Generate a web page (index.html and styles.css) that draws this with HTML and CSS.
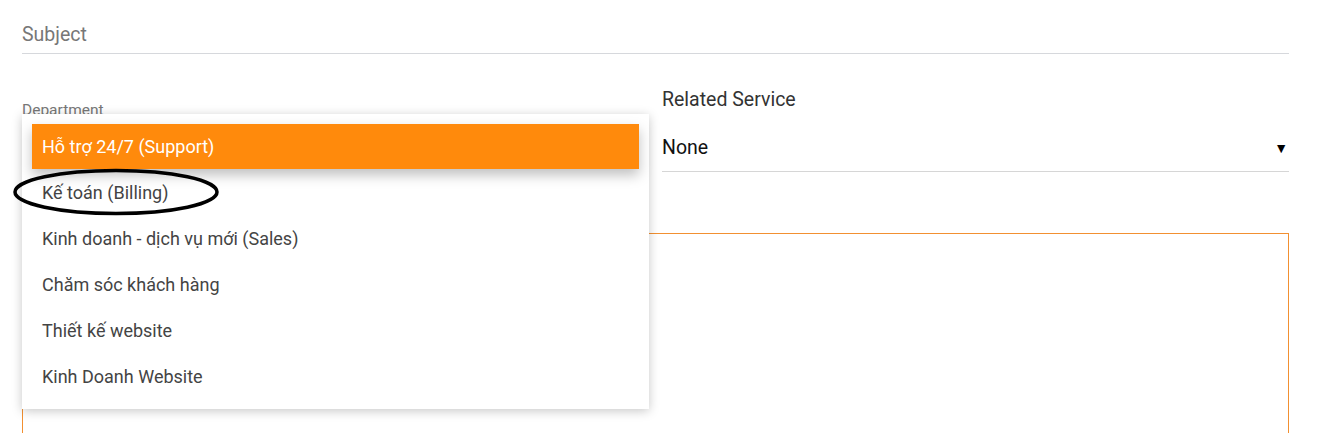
FILE: index.html
```html
<!DOCTYPE html>
<html lang="vi">
<head>
<meta charset="utf-8">
<title>Ticket</title>
<link rel="stylesheet" href="styles.css">
</head>
<body>
<div class="form">
  <div class="field subject">
    <span class="placeholder">Subject</span>
  </div>
  <div class="row">
    <div class="col">
      <label class="float-label">Department</label>
    </div>
    <div class="col">
      <label class="label">Related Service</label>
      <div class="select">
        <span class="value">None</span>
        <span class="arrow">&#9660;</span>
      </div>
    </div>
  </div>
  <div class="textarea"></div>

  <ul class="menu">
    <li class="item active">Hỗ trợ 24/7 (Support)</li>
    <li class="item">Kế toán (Billing)</li>
    <li class="item">Kinh doanh - dịch vụ mới (Sales)</li>
    <li class="item">Chăm sóc khách hàng</li>
    <li class="item">Thiết kế website</li>
    <li class="item">Kinh Doanh Website</li>
  </ul>
  <svg class="circle" width="210" height="50" viewBox="0 0 210 50">
    <ellipse cx="104" cy="24" rx="101" ry="21.5" fill="none" stroke="#000" stroke-width="3.5"/>
  </svg>
</div>
</body>
</html>
```

FILE: styles.css
```css
html, body {
  margin: 0;
  padding: 0;
  background: #fff;
  overflow: hidden;
}
body {
  font-family: Roboto, "Noto Sans", Arial, sans-serif;
  height: 433px;
}
.form {
  position: relative;
  padding: 24px 36px 0 22px;
}
.field.subject {
  border-bottom: 1px solid #d6d8dc;
  padding-bottom: 6px;
  line-height: 22px;
}
.placeholder {
  font-size: 19.5px;
  color: #777;
}
.row {
  display: grid;
  grid-template-columns: 620px 1fr;
  column-gap: 20px;
  margin-top: 35px;
}
.float-label {
  display: block;
  margin-top: 13px;
  font-size: 15.5px;
  line-height: 16px;
  color: #777;
}
.label {
  display: block;
  font-size: 19.5px;
  line-height: 22px;
  color: #333;
}
.select {
  display: flex;
  justify-content: space-between;
  align-items: center;
  margin-top: 26px;
  padding-bottom: 12px;
  line-height: 22px;
  border-bottom: 1px solid #d6d6d6;
}
.value {
  font-size: 19.5px;
  color: #111;
}
.arrow {
  font-size: 14px;
  color: #000;
  padding-right: 1px;
}
.textarea {
  margin-top: 61px;
  height: 260px;
  border: 1px solid #f29031;
}
.menu {
  position: absolute;
  left: 22px;
  top: 114px;
  width: 607px;
  margin: 0;
  padding: 10px 10px 9px;
  list-style: none;
  background: #fff;
  box-shadow: 0 2px 10px rgba(0, 0, 0, 0.22);
}
.item {
  height: 46px;
  line-height: 46px;
  padding-left: 10px;
  font-size: 18px;
  color: #444;
}
.item.active {
  height: 45px;
  line-height: 45px;
  margin-bottom: 1px;
  background: #ff8a0c;
  color: #fff;
  box-shadow: 0 6px 12px rgba(0, 0, 0, 0.25);
}
.circle {
  position: absolute;
  left: 12px;
  top: 168px;
}
```
